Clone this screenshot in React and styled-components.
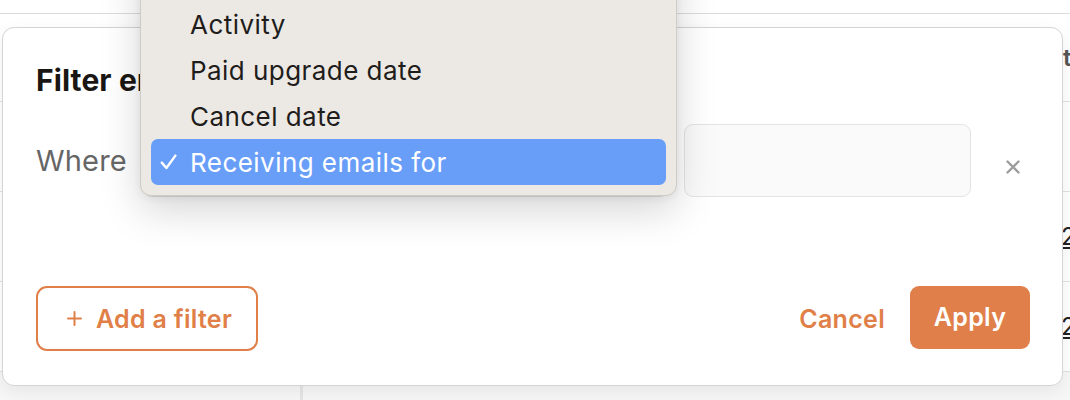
import React from "react";
import styled, { createGlobalStyle } from "styled-components";

const Global = createGlobalStyle`
  html, body {
    margin: 0;
    padding: 0;
    width: 1070px;
    height: 400px;
    overflow: hidden;
    background: #ffffff;
    font-family: Inter, "Noto Sans", "Liberation Sans", sans-serif;
  }
  * { box-sizing: border-box; }
`;

const Page = styled.div`
  position: relative;
  width: 1070px;
  height: 400px;
  overflow: hidden;
  background: #fff;
`;

const Table = styled.div`
  margin-top: 13px;
  border-top: 1px solid #dcdcdc;
  display: flex;
  flex-direction: column;
`;

const Row = styled.div`
  display: grid;
  grid-template-columns: 303px 757px 1fr;
  height: ${(p) => p.$h}px;
  border-top: ${(p) => (p.$first ? "none" : "1px solid #e2e2e2")};
  background: ${(p) => (p.$shade ? "#f7f7f7" : "transparent")};
`;

const Cell = styled.div`
  display: flex;
  align-items: center;
  padding-left: ${(p) => p.$pad || 0}px;
  border-right: ${(p) => (p.$divider ? "3px solid #e6e6e6" : "none")};
  font-size: 24px;
  color: ${(p) => (p.$head ? "#555" : "#222")};
  font-weight: ${(p) => (p.$head ? 600 : 400)};
  text-decoration: ${(p) => (p.$link ? "underline" : "none")};
  white-space: nowrap;
  overflow: hidden;
`;

const Modal = styled.div`
  position: absolute;
  left: 2px;
  top: 27px;
  width: 1061px;
  height: 359px;
  background: #fff;
  border: 1px solid #d4d4d4;
  border-radius: 12px;
  box-shadow: 0 6px 18px rgba(0, 0, 0, 0.07);
  display: flex;
  flex-direction: column;
  padding: 36px 32px 34px 33px;
`;

const Title = styled.h2`
  margin: 0;
  font-size: 30px;
  line-height: 32px;
  font-weight: 700;
  color: #1a1614;
  letter-spacing: 0.1px;
`;

const FilterRow = styled.div`
  margin-top: 28px;
  display: flex;
  align-items: center;
  height: 73px;
`;

const Label = styled.span`
  font-size: 29px;
  letter-spacing: 0.2px;
  color: #666;
  width: 107px;
  flex-shrink: 0;
`;

const Field = styled.div`
  height: 73px;
  flex: ${(p) => (p.$grow ? 1 : "none")};
  width: ${(p) => (p.$w ? `${p.$w}px` : "auto")};
  margin-left: ${(p) => p.$ml || 0}px;
  background: #fafafa;
  border: 1.5px solid #e4e4e4;
  border-radius: 9px;
`;

const CloseBtn = styled.button`
  width: 34px;
  height: 34px;
  margin-left: 25px;
  padding: 0;
  border: none;
  background: transparent;
  display: flex;
  align-items: center;
  justify-content: center;
  margin-top: 12px;
`;

const Footer = styled.div`
  margin-top: auto;
  display: flex;
  align-items: center;
  justify-content: space-between;
`;

const AddButton = styled.button`
  height: 65px;
  width: 222px;
  padding: 0 0 0 29px;
  border: 2px solid #e07f48;
  border-radius: 11px;
  background: #fff;
  color: #e07f48;
  font-family: inherit;
  font-size: 25px;
  letter-spacing: 0.3px;
  font-weight: 600;
  display: flex;
  align-items: center;
  gap: 14px;
`;

const Actions = styled.div`
  display: flex;
  align-items: center;
  gap: 25px;
`;

const TextButton = styled.button`
  border: none;
  background: transparent;
  padding: 0;
  color: #e07f48;
  font-family: inherit;
  font-size: 25px;
  letter-spacing: 0.3px;
  font-weight: 600;
`;

const PrimaryButton = styled.button`
  width: 120px;
  height: 63px;
  border: none;
  border-radius: 9px;
  background: #e07f4a;
  color: #fff;
  font-family: inherit;
  font-size: 25px;
  letter-spacing: 0.3px;
  font-weight: 600;
  margin-top: -3px;
`;

const Menu = styled.div`
  position: absolute;
  left: 140px;
  top: -56px;
  width: 537px;
  padding: 10px;
  background: #ece9e5;
  border: 1px solid #cfcbc6;
  border-radius: 11px;
  box-shadow: 0 14px 40px rgba(0, 0, 0, 0.17), 0 2px 8px rgba(0, 0, 0, 0.06);
  display: flex;
  flex-direction: column;
`;

const MenuItem = styled.div`
  height: 46px;
  border-radius: 7px;
  padding-left: 9px;
  display: flex;
  align-items: center;
  font-size: 26px;
  letter-spacing: 0.45px;
  color: ${(p) => (p.$selected ? "#fff" : "#1f1d1b")};
  background: ${(p) => (p.$selected ? "#689ef7" : "transparent")};
`;

const Check = styled.span`
  width: 30px;
  flex-shrink: 0;
  display: flex;
  align-items: center;
`;

const PlusIcon = () => (
  <svg width="15" height="15" viewBox="0 0 15 15">
    <path d="M7.5 1v13M1 7.5h13" stroke="#e07f48" strokeWidth="2" strokeLinecap="round" />
  </svg>
);

const XIcon = () => (
  <svg width="14" height="14" viewBox="0 0 14 14">
    <path d="M1.5 1.5l11 11M12.5 1.5l-11 11" stroke="#9c9c9c" strokeWidth="2.4" strokeLinecap="round" />
  </svg>
);

const CheckIcon = () => (
  <svg width="17" height="16" viewBox="0 0 17 16">
    <path d="M1.8 8.6l4.6 5.4L15.4 1.6" stroke="#fff" strokeWidth="2.4" fill="none" strokeLinecap="round" strokeLinejoin="round" />
  </svg>
);

const items = ["Signup date", "Activity", "Paid upgrade date", "Cancel date", "Receiving emails for"];

export default function App() {
  return (
    <>
      <Global />
      <Page>
        <Table>
          <Row $h={87} $first>
            <Cell $head />
            <Cell $head />
            <Cell $head $pad={3}>type</Cell>
          </Row>
          <Row $h={90}>
            <Cell />
            <Cell />
            <Cell />
          </Row>
          <Row $h={90}>
            <Cell />
            <Cell />
            <Cell $pad={1} $link>2023-10-04</Cell>
          </Row>
          <Row $h={90}>
            <Cell />
            <Cell />
            <Cell $pad={1} $link>2023-09-18</Cell>
          </Row>
          <Row $h={90} $shade>
            <Cell $divider />
            <Cell />
            <Cell />
          </Row>
        </Table>

        <Modal>
          <Title>Filter emails</Title>
          <FilterRow>
            <Label>Where</Label>
            <Field $grow />
            <Field $w={287} $ml={15} />
            <CloseBtn aria-label="Remove filter">
              <XIcon />
            </CloseBtn>
          </FilterRow>
          <Footer>
            <AddButton>
              <PlusIcon />
              Add a filter
            </AddButton>
            <Actions>
              <TextButton>Cancel</TextButton>
              <PrimaryButton>Apply</PrimaryButton>
            </Actions>
          </Footer>
        </Modal>

        <Menu>
          {items.map((label) => {
            const selected = label === "Receiving emails for";
            return (
              <MenuItem key={label} $selected={selected}>
                <Check>{selected && <CheckIcon />}</Check>
                {label}
              </MenuItem>
            );
          })}
        </Menu>
      </Page>
    </>
  );
}
